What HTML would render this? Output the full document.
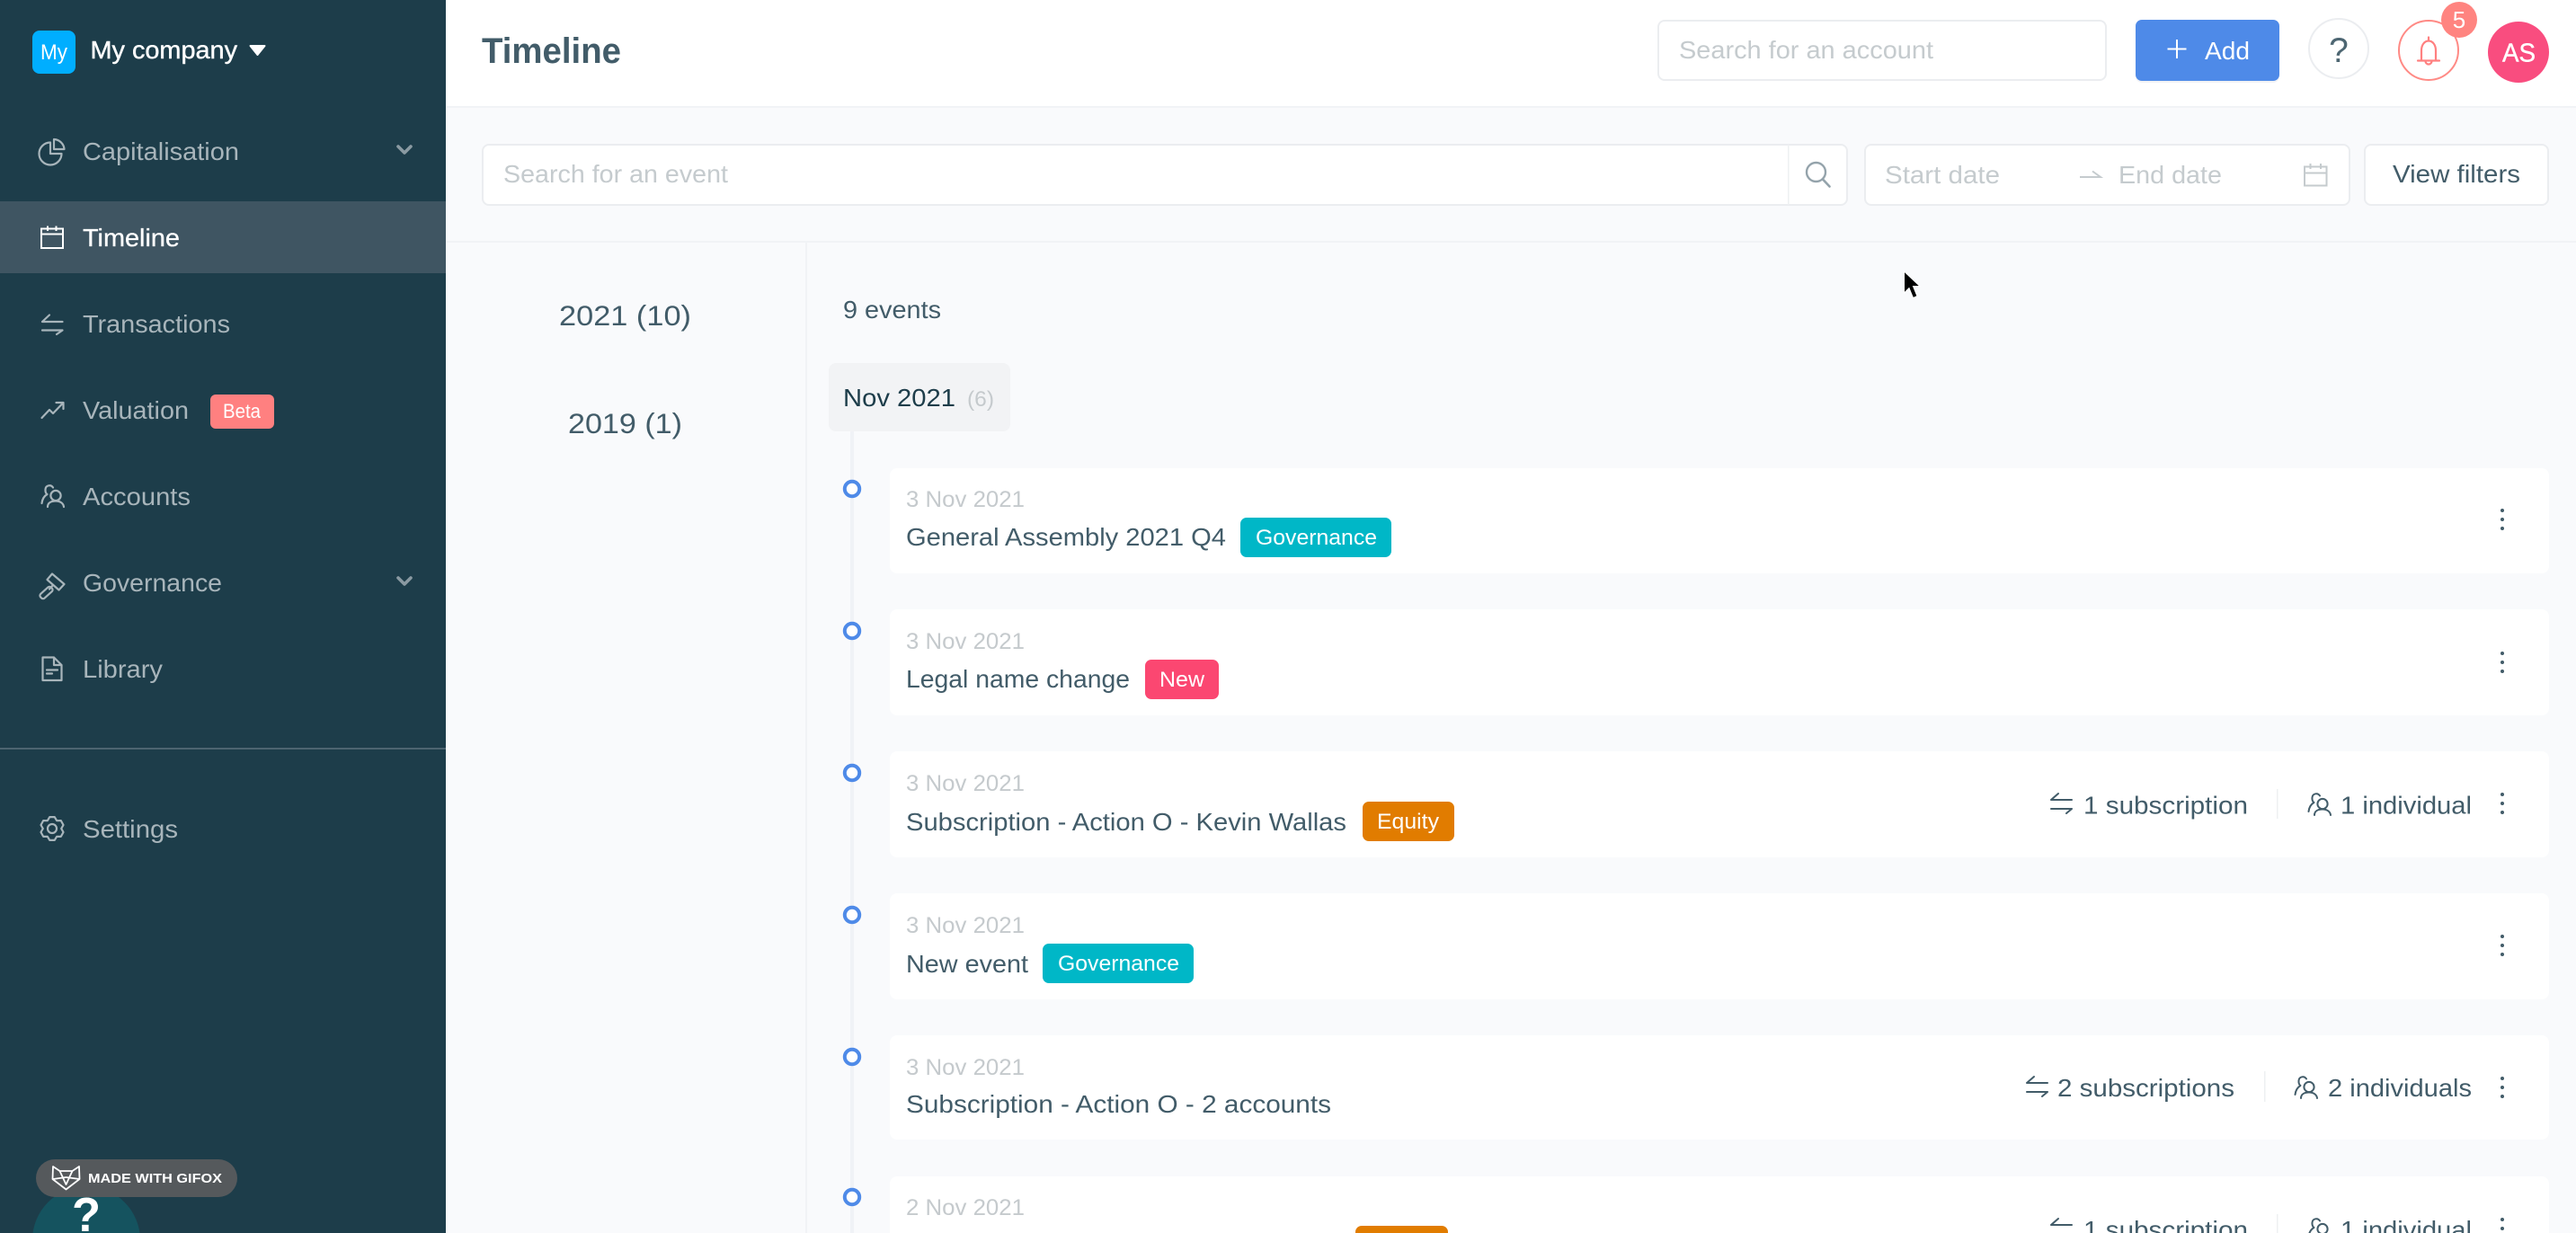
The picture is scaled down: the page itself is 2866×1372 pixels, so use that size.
<!DOCTYPE html>
<html lang="en">
<head>
<meta charset="utf-8">
<title>Timeline</title>
<style>
html,body{margin:0;padding:0;background:#f9fafc;width:2866px;height:1372px;overflow:hidden}
svg{display:block}
text{font-family:"Liberation Sans",Arial,sans-serif;white-space:pre}
.nav{font-size:28px;fill:#a8b5bb}
.ph{font-size:28px;fill:#c5cbce}
.dark{font-size:28.2px;fill:#425c69}
.date{font-size:24.6px;fill:#c5cacd}
.badge{font-size:24.2px;fill:#fff}
.ic{fill:none;stroke:#a8b5bb;stroke-width:2.2;stroke-linecap:round;stroke-linejoin:round}
.rc{fill:none;stroke:#425c69;stroke-width:2;stroke-linecap:round;stroke-linejoin:round}
</style>
</head>
<body>
<svg xmlns="http://www.w3.org/2000/svg" width="2866" height="1372" viewBox="0 0 2866 1372">
<defs>
<g id="person">
<circle cx="16" cy="12.500" r="5.600"/>
<path d="M7 25C7 20.500 11 18.500 16 18.500C21 18.500 24.500 21 25 25"/>
<path d="M13 3.500C11 0 5 0.500 4.500 5.500C4.300 8 5 10 6.500 11C3 13 1 17 0.500 21"/>
</g>
<g id="swap">
<path d="M1 8H24M1 8L9 1M1 18H24M24 18L18 23"/>
</g>
<g id="dots">
<circle cx="0" cy="-10" r="2"/><circle cx="0" cy="0" r="2"/><circle cx="0" cy="10" r="2"/>
</g>
</defs>

<!-- page -->
<rect width="2866" height="1372" fill="#f9fafc"/>

<!-- header -->
<rect x="496" y="0" width="2370" height="118" fill="#ffffff"/>
<rect x="496" y="118" width="2370" height="2" fill="#f1f3f6"/>
<text x="536" y="70" font-size="40" font-weight="700" fill="#425c69" textLength="155" lengthAdjust="spacingAndGlyphs">Timeline</text>
<rect x="1845" y="23" width="498" height="66" rx="7" fill="#fff" stroke="#ebedf0" stroke-width="2"/>
<text x="1868" y="65" class="ph" textLength="283" lengthAdjust="spacingAndGlyphs">Search for an account</text>

<rect x="2376" y="24" width="160" height="68" rx="7" fill="#f2f3f5"/>
<rect x="2376" y="22" width="160" height="68" rx="7" fill="#4e8ae8"/>
<path d="M2422 44V65M2411.500 54.500H2432.500" stroke="#fff" stroke-width="2" fill="none"/>
<text x="2453" y="66" font-size="28" fill="#fff" textLength="50" lengthAdjust="spacingAndGlyphs">Add</text>

<circle cx="2602" cy="54" r="33" fill="#fff" stroke="#ebedf0" stroke-width="2"/>
<text x="2602" y="69" font-size="39" fill="#4d6672" text-anchor="middle">?</text>

<circle cx="2702" cy="56" r="33" fill="#fff" stroke="#ff8a85" stroke-width="2"/>
<path d="M2702 41.500V45.500M2694 67V56C2694 50 2697.500 45.500 2702 45.500C2706.500 45.500 2710 50 2710 56V67M2690 67.500H2714M2698.500 68A3.500 3.500 0 0 0 2705.500 68" fill="none" stroke="#ff8080" stroke-width="2.200" stroke-linecap="round"/>
<circle cx="2736" cy="22" r="20" fill="#ff8480"/>
<text x="2736" y="31" font-size="26" fill="#fff" text-anchor="middle">5</text>

<circle cx="2802" cy="58" r="34" fill="#f94d7f"/>
<text x="2784" y="68.500" font-size="28.5" fill="#fff" stroke="#fff" stroke-width=".4" textLength="37" lengthAdjust="spacingAndGlyphs">AS</text>

<!-- filter bar -->
<rect x="537" y="161" width="1518" height="67" rx="7" fill="#fff" stroke="#ebedf0" stroke-width="2"/>
<rect x="1989" y="161" width="1.500" height="67" fill="#eef0f2"/>
<text x="560" y="203" class="ph" textLength="250" lengthAdjust="spacingAndGlyphs">Search for an event</text>
<circle cx="2020.500" cy="191.500" r="10.500" fill="none" stroke="#94a3ab" stroke-width="2.400"/>
<path d="M2028 199.500L2035.500 207.500" stroke="#94a3ab" stroke-width="2.600" stroke-linecap="round"/>

<rect x="2075" y="161" width="539" height="67" rx="7" fill="#fff" stroke="#ebedf0" stroke-width="2"/>
<text x="2097" y="204" class="ph" textLength="128" lengthAdjust="spacingAndGlyphs">Start date</text>
<path d="M2314 197H2337L2328 190.500" fill="none" stroke="#c5cbce" stroke-width="2"/>
<text x="2357" y="204" class="ph" textLength="115" lengthAdjust="spacingAndGlyphs">End date</text>
<path d="M2564 185.500H2588.500V206.500H2564ZM2564 192.500H2588.500M2570.500 182V188M2582 182V188" fill="none" stroke="#c5cbce" stroke-width="2"/>

<rect x="2631" y="161" width="204" height="67" rx="7" fill="#fff" stroke="#ebedf0" stroke-width="2"/>
<text x="2662" y="203" class="dark" textLength="142" lengthAdjust="spacingAndGlyphs">View filters</text>

<rect x="496" y="268" width="2370" height="2" fill="#f1f3f6"/>
<rect x="896" y="270" width="2" height="1102" fill="#f1f3f6"/>

<!-- years -->
<text x="622" y="362" font-size="31.5" fill="#425c69" textLength="147" lengthAdjust="spacingAndGlyphs">2021 (10)</text>
<text x="632" y="482" font-size="31.5" fill="#425c69" textLength="127" lengthAdjust="spacingAndGlyphs">2019 (1)</text>

<text x="938" y="354" class="dark" textLength="109" lengthAdjust="spacingAndGlyphs">9 events</text>

<rect x="946" y="480" width="4" height="892" fill="#f0f2f6"/>
<rect x="922" y="404" width="202" height="76" rx="8" fill="#f2f3f5"/>
<text x="938" y="452" font-size="28.2" fill="#1d3d4a" textLength="125" lengthAdjust="spacingAndGlyphs">Nov 2021</text>
<text x="1076" y="452" font-size="24" fill="#c5cacd" textLength="30" lengthAdjust="spacingAndGlyphs">(6)</text>

<!-- row 1 -->
<rect x="990" y="521" width="1846" height="117" rx="8" fill="#fff"/>
<circle cx="948" cy="544" r="8.200" fill="#fff" stroke="#4e8ae8" stroke-width="4"/>
<text x="1008" y="564" class="date" textLength="132" lengthAdjust="spacingAndGlyphs">3 Nov 2021</text>
<text x="1008" y="607" class="dark" textLength="356" lengthAdjust="spacingAndGlyphs">General Assembly 2021 Q4</text>
<rect x="1380" y="576" width="168" height="44" rx="7" fill="#00b7c7"/>
<text x="1397" y="606" class="badge" textLength="135" lengthAdjust="spacingAndGlyphs">Governance</text>
<use href="#dots" x="2784" y="578" fill="#425c69"/>

<!-- row 2 -->
<rect x="990" y="678" width="1846" height="118" rx="8" fill="#fff"/>
<circle cx="948" cy="702" r="8.200" fill="#fff" stroke="#4e8ae8" stroke-width="4"/>
<text x="1008" y="722" class="date" textLength="132" lengthAdjust="spacingAndGlyphs">3 Nov 2021</text>
<text x="1008" y="765" class="dark" textLength="249" lengthAdjust="spacingAndGlyphs">Legal name change</text>
<rect x="1274" y="734" width="82" height="44" rx="7" fill="#fb4771"/>
<text x="1290" y="764" class="badge" textLength="50" lengthAdjust="spacingAndGlyphs">New</text>
<use href="#dots" x="2784" y="737" fill="#425c69"/>

<!-- row 3 -->
<rect x="990" y="836" width="1846" height="118" rx="8" fill="#fff"/>
<circle cx="948" cy="860" r="8.200" fill="#fff" stroke="#4e8ae8" stroke-width="4"/>
<text x="1008" y="880" class="date" textLength="132" lengthAdjust="spacingAndGlyphs">3 Nov 2021</text>
<text x="1008" y="924" class="dark" textLength="490" lengthAdjust="spacingAndGlyphs">Subscription - Action O - Kevin Wallas</text>
<rect x="1516" y="892" width="102" height="44" rx="7" fill="#e17c00"/>
<text x="1532" y="922" class="badge" textLength="69" lengthAdjust="spacingAndGlyphs">Equity</text>
<use href="#swap" x="2281" y="882" class="rc"/>
<text x="2318" y="905.500" class="dark" textLength="183" lengthAdjust="spacingAndGlyphs">1 subscription</text>
<rect x="2533" y="878" width="1.500" height="33" fill="#eef0f2"/>
<use href="#person" x="2568" y="882" class="rc"/>
<text x="2604" y="905.500" class="dark" textLength="146" lengthAdjust="spacingAndGlyphs">1 individual</text>
<use href="#dots" x="2784" y="894" fill="#425c69"/>

<!-- row 4 -->
<rect x="990" y="994" width="1846" height="118" rx="8" fill="#fff"/>
<circle cx="948" cy="1018" r="8.200" fill="#fff" stroke="#4e8ae8" stroke-width="4"/>
<text x="1008" y="1038" class="date" textLength="132" lengthAdjust="spacingAndGlyphs">3 Nov 2021</text>
<text x="1008" y="1082" class="dark" textLength="136" lengthAdjust="spacingAndGlyphs">New event</text>
<rect x="1160" y="1050" width="168" height="44" rx="7" fill="#00b7c7"/>
<text x="1177" y="1080" class="badge" textLength="135" lengthAdjust="spacingAndGlyphs">Governance</text>
<use href="#dots" x="2784" y="1052" fill="#425c69"/>

<!-- row 5 -->
<rect x="990" y="1152" width="1846" height="116" rx="8" fill="#fff"/>
<circle cx="948" cy="1176" r="8.200" fill="#fff" stroke="#4e8ae8" stroke-width="4"/>
<text x="1008" y="1196" class="date" textLength="132" lengthAdjust="spacingAndGlyphs">3 Nov 2021</text>
<text x="1008" y="1238" class="dark" textLength="473" lengthAdjust="spacingAndGlyphs">Subscription - Action O - 2 accounts</text>
<use href="#swap" x="2254" y="1197" class="rc"/>
<text x="2289" y="1220" class="dark" textLength="197" lengthAdjust="spacingAndGlyphs">2 subscriptions</text>
<rect x="2519" y="1192" width="1.500" height="34" fill="#eef0f2"/>
<use href="#person" x="2553" y="1197" class="rc"/>
<text x="2590" y="1220" class="dark" textLength="160" lengthAdjust="spacingAndGlyphs">2 individuals</text>
<use href="#dots" x="2784" y="1210" fill="#425c69"/>

<!-- row 6 -->
<rect x="990" y="1309" width="1846" height="80" rx="8" fill="#fff"/>
<circle cx="948" cy="1332" r="8.200" fill="#fff" stroke="#4e8ae8" stroke-width="4"/>
<text x="1008" y="1352" class="date" textLength="132" lengthAdjust="spacingAndGlyphs">2 Nov 2021</text>
<rect x="1508" y="1364" width="103" height="44" rx="7" fill="#e17c00"/>
<use href="#swap" x="2281" y="1355" class="rc"/>
<text x="2318" y="1378" class="dark" textLength="183" lengthAdjust="spacingAndGlyphs">1 subscription</text>
<rect x="2533" y="1351" width="1.500" height="21" fill="#eef0f2"/>
<use href="#person" x="2568" y="1355" class="rc"/>
<text x="2604" y="1378" class="dark" textLength="146" lengthAdjust="spacingAndGlyphs">1 individual</text>
<use href="#dots" x="2784" y="1367" fill="#425c69"/>

<!-- cursor -->
<path d="M2118.500 302V326L2124 320.500L2128.500 331.500L2133 329.500L2128.500 318.500L2136 318.500Z" fill="#000" stroke="#fff" stroke-width="1"/>

<!-- sidebar -->
<rect x="0" y="0" width="496" height="1372" fill="#1d3d4a"/>
<rect x="36" y="34" width="48" height="48" rx="8" fill="#00aeff"/>
<text x="45" y="66" font-size="24" fill="#fff" textLength="30" lengthAdjust="spacingAndGlyphs">My</text>
<text x="100.500" y="65" font-size="28" fill="#fff" stroke="#fff" stroke-width=".4" textLength="163.500" lengthAdjust="spacingAndGlyphs">My company</text>
<path d="M278.500 51H294.500L286.500 61Z" fill="#fff" stroke="#fff" stroke-width="2" stroke-linejoin="round"/>

<!-- Capitalisation -->
<path class="ic" d="M56 158.500A12.500 12.500 0 1 0 68.500 171H56Z"/>
<path class="ic" d="M60 155A12 12 0 0 1 71.500 166H60Z"/>
<text x="92" y="178" class="nav" textLength="174" lengthAdjust="spacingAndGlyphs">Capitalisation</text>
<path d="M443 163L450 170L457 163" fill="none" stroke="#8a9aa2" stroke-width="3.600" stroke-linecap="round" stroke-linejoin="round"/>

<!-- Timeline active -->
<rect x="0" y="224" width="496" height="80" fill="#3f5562"/>
<path d="M46 254.500H70V276H46ZM46 260.500H70M53 251.500V257M62.500 251.500V257" fill="none" stroke="#fff" stroke-width="2"/>
<text x="92" y="274" font-size="28" fill="#fff" stroke="#fff" stroke-width=".3" textLength="108" lengthAdjust="spacingAndGlyphs">Timeline</text>

<!-- Transactions -->
<path class="ic" d="M47 358H69.500M47 358L55 350.500M47 367.500H69.500M69.500 367.500L63 372"/>
<text x="92" y="370" class="nav" textLength="164" lengthAdjust="spacingAndGlyphs">Transactions</text>

<!-- Valuation -->
<path class="ic" d="M46.500 465L55 456L59 460L70 448.500M62.500 448H70.500V455"/>
<text x="92" y="466" class="nav" textLength="118" lengthAdjust="spacingAndGlyphs">Valuation</text>
<rect x="234" y="439" width="71" height="38" rx="6" fill="#ff8080"/>
<text x="248" y="465" font-size="22.5" fill="#fff" textLength="42" lengthAdjust="spacingAndGlyphs">Beta</text>

<!-- Accounts -->
<use href="#person" x="46" y="539" class="ic"/>
<text x="92" y="562" class="nav" textLength="120" lengthAdjust="spacingAndGlyphs">Accounts</text>

<!-- Governance -->
<path class="ic" d="M58 638.500L71.500 650L65.500 656.500L52.500 645ZM58.500 651.500L55 655.500"/>
<rect class="ic" x="-8" y="-3.200" width="16" height="6.400" rx="2.500" transform="translate(51.500 659.500) rotate(-42)"/>
<text x="92" y="658" class="nav" textLength="155" lengthAdjust="spacingAndGlyphs">Governance</text>
<path d="M443 643L450 650L457 643" fill="none" stroke="#8a9aa2" stroke-width="3.600" stroke-linecap="round" stroke-linejoin="round"/>

<!-- Library -->
<path class="ic" stroke-linejoin="miter" d="M47.500 731.500H60L68.500 740V757H47.500ZM60 731.500V740H68.500M52 745.500H64M52 749.500H58"/>
<text x="92" y="754" class="nav" textLength="89" lengthAdjust="spacingAndGlyphs">Library</text>

<rect x="0" y="832" width="496" height="2" fill="#4d6470"/>

<!-- Settings -->
<g transform="translate(58 922)">
<path class="ic" d="M-2.700 -12.900L2.700 -12.900L5.200 -8.800L9.800 -8.900L12.500 -4L10.200 0L12.500 4L9.800 8.900L5.200 8.800L2.700 12.900L-2.700 12.900L-5.200 8.800L-9.800 8.900L-12.500 4L-10.200 0L-12.500 -4L-9.800 -8.900L-5.200 -8.800Z"/>
<circle class="ic" cx="0" cy="0" r="5"/>
</g>
<text x="92" y="932" class="nav" textLength="106" lengthAdjust="spacingAndGlyphs">Settings</text>

<!-- help bubble & gifox -->
<circle cx="96" cy="1380" r="60" fill="#15535f"/>
<text x="96" y="1370" font-size="54" font-weight="700" fill="#fff" text-anchor="middle" textLength="32" lengthAdjust="spacingAndGlyphs">?</text>
<rect x="40" y="1290" width="224" height="42" rx="21" fill="#55595c"/>
<path d="M59 1298L66.500 1303H80.500L88 1298L88.500 1312L73.500 1323.500L58.500 1312ZM66.500 1303L73.500 1318L80.500 1303M59 1312L73.500 1310L88.500 1312" fill="none" stroke="#fff" stroke-width="1.800" stroke-linejoin="round"/>
<text x="98" y="1316" font-size="14.500" font-weight="700" fill="#fff" textLength="149" lengthAdjust="spacingAndGlyphs">MADE WITH GIFOX</text>
</svg>
</body>
</html>
